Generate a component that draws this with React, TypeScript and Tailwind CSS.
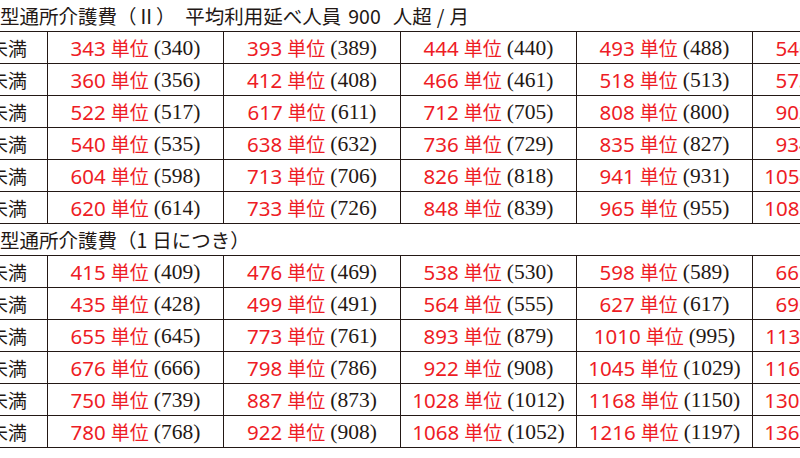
import React from "react";

type Row = [number, number][];

const t1: Row[] = [
  [[343, 340], [393, 389], [444, 440], [493, 488], [546, 540]],
  [[360, 356], [412, 408], [466, 461], [518, 513], [573, 567]],
  [[522, 517], [617, 611], [712, 705], [808, 800], [903, 894]],
  [[540, 535], [638, 632], [736, 729], [835, 827], [934, 925]],
  [[604, 598], [713, 706], [826, 818], [941, 931], [1054, 1043]],
  [[620, 614], [733, 726], [848, 839], [965, 955], [1081, 1070]],
];

const t2: Row[] = [
  [[415, 409], [476, 469], [538, 530], [598, 589], [661, 654]],
  [[435, 428], [499, 491], [564, 555], [627, 617], [693, 683]],
  [[655, 645], [773, 761], [893, 879], [1010, 995], [1130, 1113]],
  [[676, 666], [798, 786], [922, 908], [1045, 1029], [1168, 1150]],
  [[750, 739], [887, 873], [1028, 1012], [1168, 1150], [1308, 1288]],
  [[780, 768], [922, 908], [1068, 1052], [1216, 1197], [1365, 1344]],
];

const labels = [
  "3時間以上4時間未満",
  "4時間以上5時間未満",
  "5時間以上6時間未満",
  "6時間以上7時間未満",
  "7時間以上8時間未満",
  "8時間以上9時間未満",
];

function Cell({ v }: { v: [number, number] }) {
  return (
    <div className="flex items-center justify-center border-r border-[#231815] whitespace-nowrap">
      <span className="text-[#ee1c25] text-[20.5px] font-['Noto_Sans','Noto_Sans_CJK_JP',sans-serif]">
        {v[0]}
      </span>
      <span className="text-[#ee1c25] text-[19px] ml-[5px] font-['Noto_Sans_CJK_JP',sans-serif]">
        単位
      </span>
      <span className="text-[#231815] text-[21.5px] ml-[5px] font-['Liberation_Serif',serif]">
        ({v[1]})
      </span>
    </div>
  );
}

function Table({ rows }: { rows: Row[] }) {
  return (
    <div className="border-t border-[#231815]">
      {rows.map((r, i) => (
        <div
          key={i}
          className="grid grid-cols-[201px_176px_177px_176px_176px_176px] h-[32px] border-b border-[#231815]"
        >
          <div className="flex items-center justify-end pr-[20px] border-r border-[#231815] text-[19px] whitespace-nowrap font-['Noto_Sans_CJK_JP',sans-serif]">
            {labels[i]}
          </div>
          {r.map((v, j) => (
            <Cell key={j} v={v} />
          ))}
        </div>
      ))}
    </div>
  );
}

export default function App() {
  return (
    <div className="w-[800px] h-[458px] overflow-hidden bg-white text-[#231815] font-['Noto_Sans_CJK_JP',sans-serif]">
      <div className="ml-[-153px] w-[1082px]">
        <div className="h-[31px] flex items-center pl-[153px] text-[19.5px] whitespace-nowrap">
          <span>型通所介護費（Ⅱ）　平均利用延べ人員</span>
          <span className="ml-[7px]">900</span>
          <span className="ml-[12px]">人超</span>
          <span className="mx-[5px]">/</span>
          <span>月</span>
        </div>
        <Table rows={t1} />
        <div className="h-[31px] flex items-center pl-[153px] text-[19.5px] whitespace-nowrap">
          <span>型通所介護費（1</span>
          <span className="ml-[5px]">日につき）</span>
        </div>
        <Table rows={t2} />
      </div>
    </div>
  );
}
